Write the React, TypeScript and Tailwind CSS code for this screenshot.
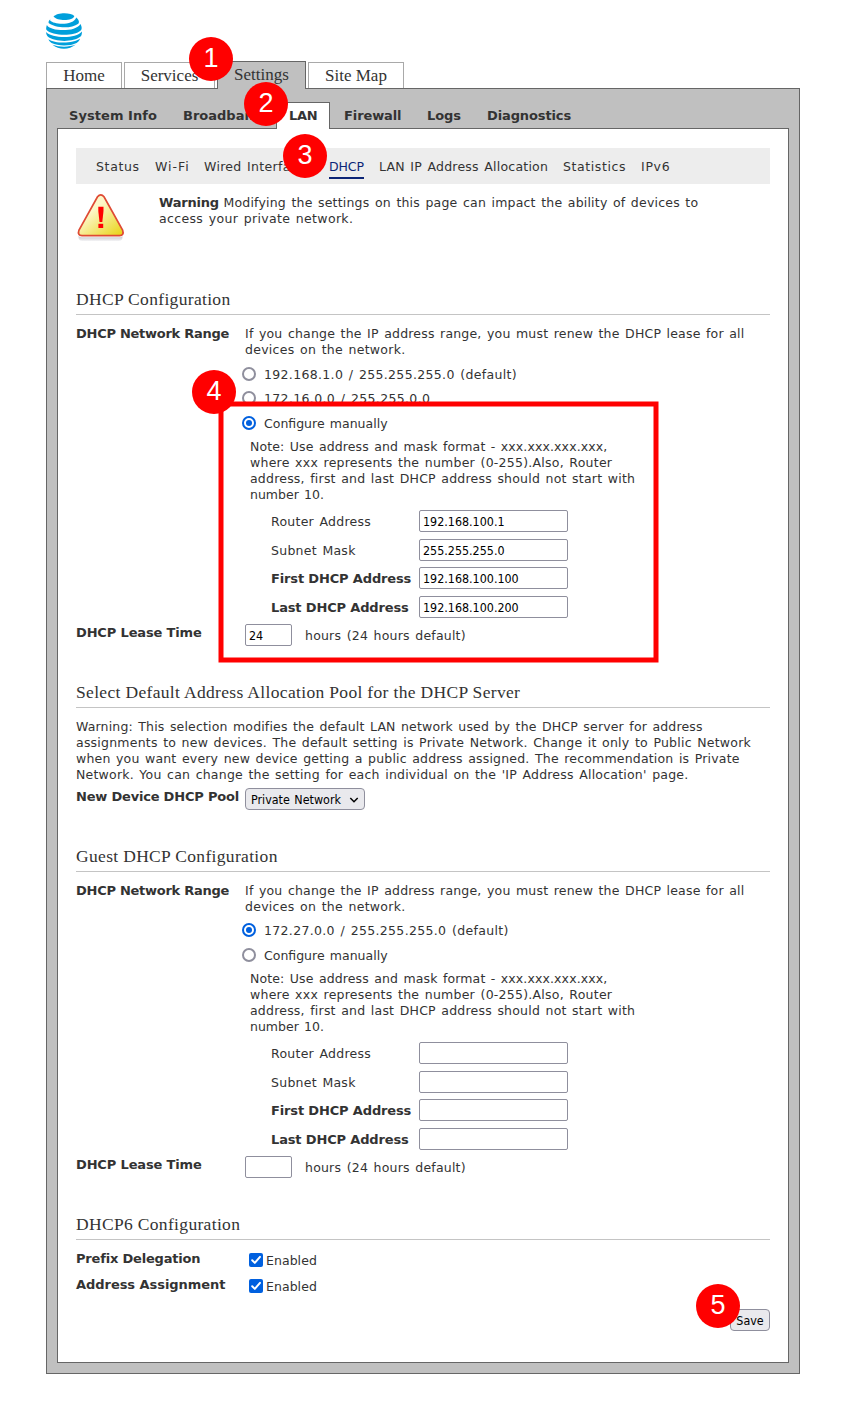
import { ReactNode } from 'react'

const sans = "font-['DejaVu_Sans',Verdana,sans-serif]"
const ui = "font-['DejaVu_Sans_Condensed','DejaVu_Sans',sans-serif]"
const serif = "font-['Liberation_Serif',Georgia,serif]"

function Logo() {
  return (
    <svg width="36" height="36" viewBox="0 0 36 36" fill="#009fdb">
      <path d="M7.500 3.500C11-.8 25-1 28.300 3 27.500 8 11.500 8.600 7.500 3.500Z" />
      <path d="M5.300 5.600C4.300 6.300 3.900 7 4.200 7.600 8 12 28 12.600 30.200 4.500 32.500 6.300 33.900 9 32.300 10.700 25 16.200 9 15 2.600 9.900 2.200 8.500 3.600 6.700 5.300 5.600Z" />
      <path d="M.9 11.900C4 18.400 29.500 19.600 34.500 10.900 36.200 14.500 35.900 16.500 34.700 17.400 27.500 23.800 6 22.800.4 16.700-.1 15.500.3 13.300 .9 11.900Z" />
      <path d="M.1 19C6 25.300 29.500 26.300 36 18.400 35.900 21.300 35.300 22.900 34.500 23.600 27 29.600 9 29 2 23.800.8 22.700.2 21 .1 19Z" />
      <path d="M2.400 26.200C9 30.700 27 31 34.200 25.500 33 28.200 31.900 29.200 30.600 29.900 24 33.300 12 33.100 5.600 30 4.300 29.200 3.200 28 2.400 26.200Z" />
      <path d="M6.400 31.800C13 34.300 23 34.500 29.800 31.600 23 37.300 13 37.200 6.400 31.800Z" />
    </svg>
  )
}

function WarningIcon() {
  return (
    <svg width="50" height="50" viewBox="0 0 50 50">
      <defs>
        <linearGradient id="tri" x1="0.2" y1="0.2" x2="0.9" y2="1">
          <stop offset="0.2" stopColor="#fdf7c8" />
          <stop offset="1" stopColor="#e9d51d" />
        </linearGradient>
        <linearGradient id="shade" x1="0" y1="0" x2="0" y2="1">
          <stop offset="0" stopColor="#a5a7b0" />
          <stop offset="1" stopColor="#f4f4f6" />
        </linearGradient>
      </defs>
      <rect x="2.500" y="40" width="44" height="8" rx="4" fill="url(#shade)" />
      <path d="M21.500 2.500Q24.800-1.400 28.200 2.500L47.300 37.500Q49 44 43.500 44.300H5.500Q.6 43.500 2.700 37.500Z" fill="#fff" />
      <path d="M21.500 3.800Q24.800 0 28 3.800L46.600 37Q48.400 42.600 43.600 42.700H6Q1.100 42.500 3 37Z" fill="url(#tri)" stroke="#df4a34" strokeWidth="1.700" />
      <path d="M22.300 13.800H27.500V18L26.300 29H23.500L22.300 18Z" fill="#f00" />
      <rect x="22.400" y="30.800" width="4.800" height="4.200" fill="#f00" />
    </svg>
  )
}

function Badge({ n, pos }: { n: number; pos: string }) {
  return (
    <div className={`absolute z-20 flex size-11 justify-center rounded-full bg-[#ff0000] pt-[6px] font-['Liberation_Sans',Arial,sans-serif] text-[27px] leading-[31px] tracking-normal text-white ${pos}`}>
      {n}
    </div>
  )
}

function Heading({ children, className = '' }: { children: ReactNode; className?: string }) {
  return (
    <h2 className={`${serif} h-[25px] border-b border-[#c4c4c4] text-[17.500px] leading-[18px] tracking-[0.330px] whitespace-nowrap [word-spacing:0px] ${className}`}>
      {children}
    </h2>
  )
}

function Label({ children, className }: { children: ReactNode; className: string }) {
  return (
    <div className={`w-[169px] shrink-0 text-[13px] font-bold whitespace-nowrap [word-spacing:0px] ${className}`}>
      {children}
    </div>
  )
}

function Radio({ checked, children, className = '' }: { checked?: boolean; children: ReactNode; className?: string }) {
  return (
    <label className={`-ml-[3px] flex h-6 items-center gap-2 ${className}`}>
      <span className={`flex size-[14px] items-center justify-center rounded-full border-2 bg-white ${checked ? 'border-[#0060df]' : 'border-[#8f8f9d]'}`}>
        {checked && <span className="size-[6px] rounded-full bg-[#0060df]" />}
      </span>
      <span className="pt-px">{children}</span>
    </label>
  )
}

function Input({ value, className }: { value: string; className: string }) {
  return (
    <input
      defaultValue={value}
      className={`${ui} h-[22px] rounded-[2px] border border-[#8f8f9d] bg-white px-[3px] pt-px text-[12.400px] tracking-normal text-black [word-spacing:0px] ${className}`}
    />
  )
}

function Field({ label, value, bold, className }: { label: string; value: string; bold?: boolean; className: string }) {
  return (
    <div className={`flex h-[22px] items-center pl-[26px] ${className}`}>
      <span className={`w-[148px] pt-px whitespace-nowrap ${bold ? 'text-[13px] font-bold tracking-[-0.150px] [word-spacing:0px]' : 'tracking-[0.260px]'}`}>{label}</span>
      <Input value={value} className="w-[149px]" />
    </div>
  )
}

function ManualFields({ values, lease }: { values: string[]; lease: string }) {
  return (
    <>
      <div className="mt-1 ml-[5px] whitespace-nowrap">
        <span className="tracking-[0.120px]">Note: Use address and mask format - xxx.xxx.xxx.xxx,</span><br />
        <span className="tracking-[0.240px]">where xxx represents the number (0-255).Also, Router</span><br />
        <span className="tracking-[0.210px]">address, first and last DHCP address should not start with</span><br />
        <span className="tracking-[0px]">number 10.</span>
      </div>
      <Field className="mt-[7px]" label="Router Address" value={values[0]} />
      <Field className="mt-[7px]" label="Subnet Mask" value={values[1]} />
      <Field className="mt-[6px]" label="First DHCP Address" value={values[2]} bold />
      <Field className="mt-[7px]" label="Last DHCP Address" value={values[3]} bold />
      <div className="mt-[6px] flex h-[22px] items-center">
        <Input value={lease} className="w-[47px]" />
        <span className="ml-[13px] pt-px tracking-[0.210px]">hours (24 hours default)</span>
      </div>
    </>
  )
}

function RangeRow({ children }: { children: ReactNode }) {
  return (
    <div className="flex pt-[11px]">
      <div className="flex flex-col justify-between">
        <Label className="tracking-[-0.270px]">DHCP Network Range</Label>
        <Label className="mb-[5px] tracking-[-0.150px]">DHCP Lease Time</Label>
      </div>
      <div className="flex-1">
        <div className="whitespace-nowrap">
          If you change the IP address range, you must renew the DHCP lease for all<br />
          <span className="tracking-[0.270px]">devices on the network.</span>
        </div>
        {children}
      </div>
    </div>
  )
}

function CheckRow({ label, className }: { label: string; className: string }) {
  return (
    <div className="flex h-[26px]">
      <Label className={`pt-1 ${className}`}>{label}</Label>
      <label className="flex items-center pl-1">
        <svg width="14" height="14" viewBox="0 0 14 14">
          <rect width="14" height="14" rx="2" fill="#0060df" />
          <path d="M3.200 7.300 5.800 9.900 11 3.900" fill="none" stroke="#fff" strokeWidth="2" strokeLinecap="round" strokeLinejoin="round" />
        </svg>
        <span className="ml-[3px] pt-0.5 tracking-[0.050px]">Enabled</span>
      </label>
    </div>
  )
}

const tab = 'flex justify-center border border-b-0 border-[#a9a9a9] bg-white'

export default function App() {
  return (
    <div className={`${sans} relative h-[1413px] w-[846px] bg-white pt-[13px] pl-[46px] text-[12.500px] leading-4 tracking-[0.190px] text-[#333] [word-spacing:1.300px]`}>
      <Logo />
      <nav className={`${serif} relative z-10 -mb-px mt-3 flex h-[28px] items-end gap-[2px] text-[17px] leading-[26px] tracking-normal [word-spacing:0px]`}>
        <div className={`${tab} mb-px h-[26px] w-[76px]`}>Home</div>
        <div className={`${tab} mb-px h-[26px] w-[91px]`}>Services</div>
        <div className="flex h-[28px] w-[89px] justify-center border border-b-0 border-[#666] bg-[#c0c0c0]">Settings</div>
        <div className={`${tab} mb-px h-[26px] w-[96px]`}>Site Map</div>
      </nav>
      <div className="h-[1286px] w-[754px] border border-[#666] bg-[#c0c0c0] px-[10px] pt-[13px]">
        <nav className="relative z-10 -mb-px flex h-[27px] text-[13px] leading-[27px] font-bold tracking-normal whitespace-nowrap [word-spacing:0px]">
          <span className="ml-3 w-[114px] tracking-[0.060px]">System Info</span>
          <span className="w-[93px]">Broadband</span>
          <span className="w-[54px] border border-b-0 border-[#666] bg-white pl-3 leading-[25px] tracking-[-0.300px]">LAN</span>
          <span className="ml-[14px] w-[83px] tracking-[-0.100px]">Firewall</span>
          <span className="w-[60px] tracking-[-0.100px]">Logs</span>
          <span className="tracking-[-0.120px]">Diagnostics</span>
        </nav>
        <main className="h-[1235px] border border-[#666] bg-white px-[18px] pt-[19px]">
          <nav className="flex h-9 bg-[#ededed] pt-[11px] pl-5 whitespace-nowrap">
            <span className="w-[59px] tracking-[0.650px]">Status</span>
            <span className="w-[49px] tracking-[1px]">Wi-Fi</span>
            <span className="w-[125px] tracking-[0.300px]">Wired Interfaces</span>
            <span className="mr-[15px] h-5 w-[35px] border-b-2 border-[#0c2577] tracking-[-0.100px] text-[#0c2577]">DHCP</span>
            <span className="w-[184px] tracking-[0.220px]">LAN IP Address Allocation</span>
            <span className="w-[78px] tracking-[0.600px]">Statistics</span>
            <span className="tracking-[0.700px]">IPv6</span>
          </nav>
          <div className="flex h-[106px]">
            <div className="w-[83px] pt-[9px]"><WarningIcon /></div>
            <div className="pt-[11px] whitespace-nowrap">
              <b className="text-[13px] tracking-[-0.200px]">Warning</b>
              <span className="-ml-px tracking-[0.200px]"> Modifying the settings on this page can impact the ability of devices to</span><br />
              <span className="tracking-[0.330px]">access your private network.</span>
            </div>
          </div>

          <Heading>DHCP Configuration</Heading>
          <RangeRow>
            <Radio className="mt-1 tracking-[0.330px]">192.168.1.0 / 255.255.255.0 (default)</Radio>
            <Radio className="tracking-[0.350px]">172.16.0.0 / 255.255.0.0</Radio>
            <Radio className="mt-px tracking-[0px]" checked>Configure manually</Radio>
            <ManualFields values={['192.168.100.1', '255.255.255.0', '192.168.100.100', '192.168.100.200']} lease="24" />
          </RangeRow>

          <Heading className="mt-[37px]">Select Default Address Allocation Pool for the DHCP Server</Heading>
          <p className="pt-[11px] whitespace-nowrap">
            <span className="tracking-[0.160px]">Warning: This selection modifies the default LAN network used by the DHCP server for address</span><br />
            <span className="tracking-[0.220px]">assignments to new devices. The default setting is Private Network. Change it only to Public Network</span><br />
            when you want every new device getting a public address assigned. The recommendation is Private<br />
            <span className="tracking-[0.215px]">Network. You can change the setting for each individual on the 'IP Address Allocation' page.</span>
          </p>
          <div className="mt-[5px] flex">
            <Label className="pt-px tracking-[-0.200px]">New Device DHCP Pool</Label>
            <button className={`${ui} flex h-[22px] w-[120px] items-center rounded-[4px] border border-[#8f8f9d] bg-[#e9e9ed] pt-px pl-[5px] text-[12.400px] tracking-normal whitespace-nowrap text-black [word-spacing:1px]`}>
              Private Network
              <svg className="ml-2" width="10" height="8" viewBox="0 0 10 8">
                <path d="M1.300 2 5 5.700 8.700 2" fill="none" stroke="#000" strokeWidth="1.500" />
              </svg>
            </button>
          </div>

          <Heading className="mt-[37px]">Guest DHCP Configuration</Heading>
          <RangeRow>
            <Radio className="mt-[3px] tracking-[0.330px]" checked>172.27.0.0 / 255.255.255.0 (default)</Radio>
            <Radio className="mt-px tracking-[0px]">Configure manually</Radio>
            <ManualFields values={['', '', '', '']} lease="" />
          </RangeRow>

          <Heading className="mt-[37px]">DHCP6 Configuration</Heading>
          <div className="mt-[7px]">
            <CheckRow label="Prefix Delegation" className="tracking-[-0.190px]" />
            <CheckRow label="Address Assignment" className="tracking-[-0.050px]" />
          </div>
          <button className={`${ui} mt-[10px] ml-auto block h-[22px] w-10 rounded-[4px] border border-[#8f8f9d] bg-[#e9e9ed] pt-px text-[12.400px] tracking-normal text-black`}>
            Save
          </button>
        </main>
      </div>

      <svg className="absolute top-[398px] left-[215px] z-10" width="448" height="268">
        <rect x="6" y="6" width="435" height="256" fill="none" stroke="#ff0000" strokeWidth="5" />
      </svg>
      <Badge n={1} pos="left-[189px] top-[37px]" />
      <Badge n={2} pos="left-[244px] top-[82px]" />
      <Badge n={3} pos="left-[283px] top-[134px]" />
      <Badge n={4} pos="left-[192px] top-[370px]" />
      <Badge n={5} pos="left-[696px] top-[1284px]" />
    </div>
  )
}
